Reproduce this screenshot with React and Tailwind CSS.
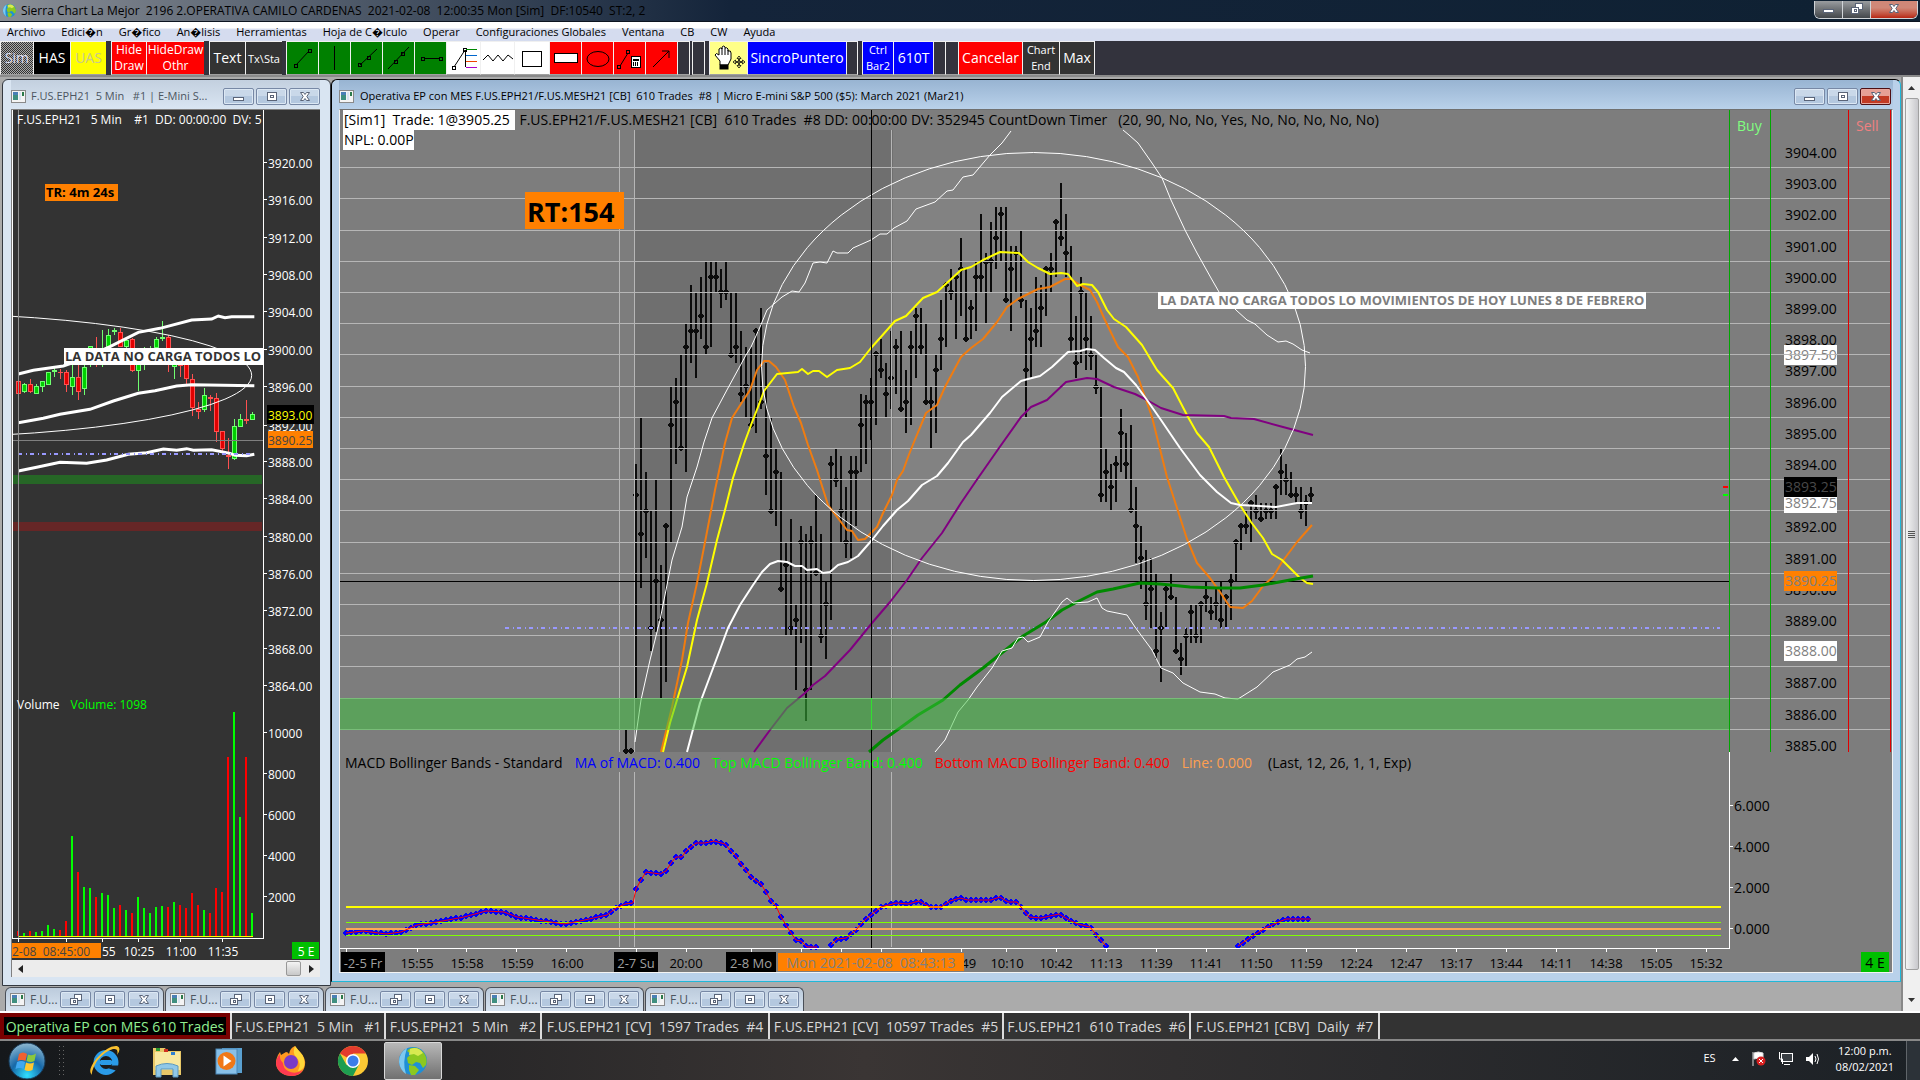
import React from "react";

const line = (s) => "M" + s.trim().split(/\s+/).join("L");

/* high, low, close; one bar every 5px from x=626 */
const BARS = `730 752 751,750 752 751,464 698 495,418 588 534,472 558 511,510 651 628,480 632 581,565 698 620,526 682 526,387 542 425,378 464 402,355 448 448,324 472 347,285 363 331,293 378 331,277 339 316,262 354 347,262 347 277,262 292 277,269 308 292,262 300 292,293 356 355,293 363 347,331 402 394,347 417 386,347 427 425,331 433 331,308 409 402,363 495 456,417 512 511,449 526 472,472 589 589,543 635 565,519 635 628,605 690 620,526 643 542,534 721 690,526 690 542,495 575 573,534 643 636,582 659 604,456 620 464,448 487 480,456 542 511,487 558 542,456 558 472,456 526 472,394 472 425,395 464 402,378 440 402,354 425 354,339 378 370,363 417 394,331 409 378,339 394 347,331 410 409,370 433 402,331 425 347,308 378 316,308 354 347,324 403 402,387 448 402,355 433 370,300 370 339,283 347 285,269 300 292,275 339 277,238 316 269,269 341 339,300 339 308,262 331 277,214 292 277,253 323 262,222 292 261,207 269 238,207 262 214,207 302 300,246 331 269,246 292 253,231 308 300,300 417 370,308 378 339,277 347 331,285 347 308,269 316 269,253 292 269,222 277 222,183 246 238,214 277 253,246 353 339,316 378 363,277 363 292,292 370 339,316 370 355,355 394 387,387 502 495,449 502 472,464 510 487,456 502 464,409 472 433,433 479 464,425 513 510,487 563 526,526 589 558,550 620 604,558 628 589,574 659 651,612 682 628,587 627 589,574 600 597,597 653 651,643 675 659,628 667 636,605 643 612,605 643 636,602 643 604,582 612 597,597 620 612,589 620 604,582 628 620,595 627 597,574 620 581,540 582 542,523 550 526,511 534 526,501 542 503,495 519 511,503 520 519,503 519 511,503 519 511,485 519 487,448 495 472,464 495 480,472 497 495,487 503 495,487 519 511,495 526 503,487 503 495`
  .split(",")
  .map((b, i) => [626 + i * 5, ...b.split(" ").map(Number)]);

const YELLOW = line(`663,752 670,723 687,667 697,620 707,583 717,540 725,510 733,478 744,444 751,425 758,407 764,391 777,374 798,372 802,369 808,374 813,371 819,371 827,377 837,370 850,368 860,362 871,348 880,338 895,321 906,316 923,298 937,292 961,270 971,267 983,260 1000,252 1019,253 1028,262 1038,268 1050,274 1061,273 1068,274 1077,286 1083,284 1092,285 1098,292 1107,310 1114,319 1126,327 1142,345 1157,370 1173,388 1188,417 1197,433 1209,447 1224,477 1240,505 1251,522 1263,538 1272,554 1282,560 1300,578 1307,583 1313,584`);
const ORANGE = line(`661,752 672,707 682,660 688,623 697,583 706,537 715,490 725,443 732,418 739,407 750,390 757,370 764,361 769,361 776,367 785,380 794,407 801,423 808,445 817,470 828,505 847,530 852,531 858,540 865,539 877,527 883,513 892,495 897,480 903,471 908,457 914,442 926,413 937,405 945,387 961,357 971,348 983,339 997,322 1007,307 1018,299 1038,289 1050,287 1065,279 1071,279 1080,285 1090,290 1097,302 1104,318 1118,347 1128,357 1138,377 1152,417 1167,477 1187,539 1197,563 1210,578 1220,592 1230,607 1243,608 1252,601 1263,586 1273,577 1282,562 1297,542 1312,525`);
const WHITE = line(`687,752 700,703 715,663 728,628 740,605 753,585 762,572 770,564 778,561 787,562 795,566 802,566 807,570 817,569 823,573 830,572 838,565 848,562 858,556 872,540 883,526 897,510 908,501 922,485 937,476 948,463 963,442 971,435 990,413 1002,397 1021,381 1028,379 1040,376 1052,367 1068,352 1080,351 1087,349 1095,350 1104,358 1116,368 1124,372 1136,385 1147,400 1161,420 1180,448 1200,475 1217,492 1231,503 1240,505 1259,506 1276,507 1297,503 1312,503`);
const PURPLE = line(`754,752 770,730 787,708 805,693 813,685 825,676 850,650 872,623 890,602 907,580 922,558 942,533 961,503 976,481 999,448 1021,417 1031,407 1047,400 1066,382 1087,378 1097,379 1114,387 1135,394 1147,400 1161,408 1183,415 1224,416 1231,418 1254,419 1283,427 1313,435`);
const GREEN = line(`869,752 883,740 900,728 918,715 943,700 960,685 983,668 1003,652 1023,636 1046,622 1062,610 1077,602 1097,592 1113,589 1140,583 1160,584 1190,587 1217,588 1240,588 1263,585 1290,580 1313,576`);
const BAND_UP = line(`635,742 641,700 650,660 660,620 668,580 672,560 682,527 687,497 697,467 704,442 712,418 728,388 746,355 751,347 760,327 767,310 782,297 792,291 799,292 805,283 813,263 820,262 827,263 833,251 837,253 848,253 853,248 871,240 880,234 887,234 894,228 907,221 916,209 935,202 947,191 953,190 963,177 973,175 990,155 1002,143 1011,131`);
const BAND_UP2 = line(`1123,130 1129,135 1138,143 1152,163 1162,178 1171,200 1185,230 1197,253 1211,278 1219,292 1236,310 1247,320 1255,324 1267,335 1278,342 1286,341 1293,344 1302,350 1310,353`);
const BAND_LOW = line(`935,752 945,740 958,712 968,700 977,687 992,668 1002,651 1012,648 1018,638 1023,637 1028,642 1040,637 1048,622 1062,602 1067,598 1073,603 1088,602 1097,598 1102,608 1107,611 1127,615 1135,627 1152,650 1161,668 1173,673 1183,683 1200,692 1215,694 1225,698 1238,699 1257,687 1273,672 1290,665 1297,659 1305,657 1312,652`);

const MACD_A = `346,933 363,931 386,934 401,932 417,925 437,922 464,917 486,911 504,912 517,917 544,921 564,924 580,921 598,917 607,915 616,908 625,904 633,903 636,889 641,880 646,872 660,874 666,871 671,863 676,857 682,857 686,851 696,843 705,843 714,841 725,844 731,851 736,856 741,864 746,870 751,877 761,884 766,892 771,901 776,906 781,917 786,925 791,933 796,940 801,941 807,947 817,947`;
const MACD_B = `831,945 837,939 846,938 856,930 861,924 866,919 871,915 876,911 881,907 896,903 908,904 919,901 930,907 941,907 950,901 960,898 968,900 991,900 1000,897 1008,902 1017,902 1029,917 1041,918 1059,914 1071,921 1078,924 1090,927 1098,937 1106,946`;
const MACD_C = `1238,946 1251,937 1267,927 1286,919 1311,919`;

/* one marker every 5px along a polyline */
const markers = (s) => {
  const p = s.split(" ").map((q) => q.split(",").map(Number));
  const out = [];
  for (let x = p[0][0]; x <= p[p.length - 1][0]; x += 5) {
    const k = Math.max(1, p.findIndex((q) => q[0] >= x));
    const [x0, y0] = p[k - 1];
    const [x1, y1] = p[k];
    out.push([x, Math.round(y0 + ((y1 - y0) * (x - x0)) / (x1 - x0))]);
  }
  return out;
};
const dots = (s) => markers(s).map(([x, y]) => `M${x - 3},${y}l3,-4l3,4l-3,4z`).join("");

const GRID = [167, 198, 230, 261, 292, 323, 354, 386, 417, 448, 479, 510, 542, 573, 604, 635, 666, 698, 729];
const TIMES = ["15:55", "15:58", "15:59", "16:00"].map((t, i) => [417 + i * 50, t]).concat(
  [[686, "20:00"], [967, ":49"], [1007, "10:10"], [1056, "10:42"], [1106, "11:13"]],
  ["11:39", "11:41", "11:50", "11:59", "12:24", "12:47", "13:17", "13:44", "14:11", "14:38", "15:05", "15:32"].map((t, i) => [1156 + i * 50, t])
);
const TICKS = [346, 417, 466, 516, 566, 636, 686, 751, 801, 841, 881, 921, 961, 1006, 1056, 1106, ...Array.from({ length: 12 }, (_, i) => 1156 + i * 50)];

function T({ x, y, s = 14, fill = "#000", anchor = "start", bold, children }) {
  return (
    <text x={x} y={y} fontSize={s} fill={fill} textAnchor={anchor} fontWeight={bold ? 700 : 400} style={{ whiteSpace: "pre" }}>
      {children}
    </text>
  );
}

function PriceTag({ y, h = 20, bg, fill, children }) {
  return (
    <g>
      <rect x="1784" y={y} width="53" height={h} fill={bg} />
      <T x={1785} y={y + 15} fill={fill}>{children}</T>
    </g>
  );
}

function MainChart() {
  return (
    <div className="relative min-h-0 flex-1 overflow-hidden bg-[#7d7d7d]">
      <svg className="block h-full w-full" viewBox="340 110 1552 862" preserveAspectRatio="xMinYMin slice">
        <rect x="340" y="110" width="1552" height="862" fill="#7d7d7d" />
        <rect x="635" y="130" width="258" height="622" fill="#6f6f6f" />
        <ellipse cx="1033.5" cy="366.5" rx="272" ry="214" fill="#fff" fillOpacity=".045" />
        <g shapeRendering="crispEdges" fill="#000">
          {BARS.map(([x, h, l, c]) => (
            <React.Fragment key={x}>
              <rect x={x - 1} y={h} width="2" height={l - h} fill="#0c0c0c" />
              <path d={`M${x - 3},${c - 1}h1v-1h1v-1h2v1h1v1h1v2h-1v1h-1v1h-2v-1h-1v-1h-1z`} fill="#0c0c0c" />
            </React.Fragment>
          ))}
        </g>
        <g shapeRendering="crispEdges" fill="#b6b6b6">
          {GRID.map((y) => <rect key={y} x="340" y={y} width="1550" height="1" />)}
          {[619, 634, 891].map((x) => (
            <React.Fragment key={x}>
              <rect x={x} y="130" width="1" height="622" />
              <rect x={x} y="772" width="1" height="175" />
            </React.Fragment>
          ))}
        </g>
        <rect x="340" y="581" width="1389" height="1" fill="#000" />
        <path d="M505 628H1720" stroke="#9999ff" strokeWidth="2" strokeDasharray="4 4 1 3" />
        <g fill="none" strokeLinejoin="round">
          <path d={ORANGE} stroke="#f07c10" strokeWidth="2" />
          <path d={YELLOW} stroke="#ffff00" strokeWidth="2" />
          <path d={PURPLE} stroke="#800080" strokeWidth="2" />
          <path d={GREEN} stroke="#008a00" strokeWidth="3" />
          <path d={WHITE} stroke="#fff" strokeWidth="2" />
          <g stroke="#fff" strokeWidth="1">
            <path d={BAND_UP} />
            <path d={BAND_UP2} />
            <path d={BAND_LOW} />
            <ellipse cx="1033.5" cy="366.5" rx="272" ry="214" />
          </g>
        </g>
        <rect x="340" y="698" width="1389" height="32" fill="#3bc33b" fillOpacity=".5" />
        <rect x="871" y="110" width="1" height="838" fill="#000" />
        <rect x="871" y="698" width="1" height="32" fill="#30e030" />

        <g shapeRendering="crispEdges">
          <path d={dots(MACD_A) + dots(MACD_B) + dots(MACD_C)} fill="#0000ff" />
          <rect x="346" y="906" width="1375" height="2" fill="#ffff00" />
          <rect x="346" y="922" width="1375" height="1" fill="#80ff00" />
          <rect x="346" y="928" width="1375" height="2" fill="#ffa858" />
          <rect x="346" y="935" width="1375" height="1" fill="#80ff00" />
        </g>
        {[MACD_A, MACD_B, MACD_C].map((m) => <path key={m} d={line(m)} fill="none" stroke="#f00" />)}
        <g shapeRendering="crispEdges" fill="#fff">
          <rect x="340" y="948" width="1390" height="1" />
          <rect x="1729" y="752" width="1" height="197" />
          {TICKS.map((x) => <rect key={x} x={x} y="949" width="1" height="3" />)}
          {[805, 846, 887, 928].map((y) => <rect key={y} x="1730" y={y} width="3" height="1" />)}
        </g>
        <g shapeRendering="crispEdges">
          <rect x="1729" y="110" width="1" height="642" fill="#00a800" />
          <rect x="1770" y="110" width="1" height="642" fill="#00a800" />
          <rect x="1848" y="110" width="1" height="642" fill="#e00000" />
          <rect x="1890" y="110" width="1" height="642" fill="#e00000" />
          <rect x="1723" y="486" width="5" height="2" fill="#f00" />
          <rect x="1723" y="494" width="5" height="2" fill="#0f0" />
        </g>
        <T x={1737} y={131} fill="#80ff80">Buy</T>
        <T x={1856} y={131} fill="#f08080">Sell</T>
        {Array.from({ length: 20 }, (_, i) => 3904 - i).filter((p) => p !== 3888 && p !== 3893).map((p) => (
          <T key={p} x={1785} y={Math.round(158 + (3904 - p) * 31.2)}>{p}.00</T>
        ))}
        <PriceTag y={345} bg="#fff" fill="#808080">3897.50</PriceTag>
        <rect x="1784" y="354" width="53" height="1" fill="#b6b6b6" />
        <PriceTag y={493} bg="#fff" fill="#808080">3892.75</PriceTag>
        <PriceTag y={477} bg="#000" fill="#484848">3893.25</PriceTag>
        <PriceTag y={571} bg="#ff8000" fill="#808080">3890.25</PriceTag>
        <PriceTag y={641} bg="#fff" fill="#808080">3888.00</PriceTag>
        {["6.000", "4.000", "2.000", "0.000"].map((t, i) => <T key={t} x={1734} y={811 + i * 41}>{t}</T>)}

        {TIMES.map(([x, t]) => <T key={t} x={x} y={968} s={13} anchor="middle">{t}</T>)}
        {[[341, 44, "-2-5 Fr"], [614, 44, "2-7 Su"], [726, 50, "2-8 Mo"]].map(([x, w, t]) => (
          <g key={t}>
            <rect x={x} y="952" width={w} height="20" fill="#000" />
            <T x={x + w / 2} y={968} s={13} fill="#a0a0a0" anchor="middle">{t}</T>
          </g>
        ))}
        <rect x="778" y="953" width="186" height="18" fill="#ff8000" />
        <T x={871} y={968} s={14} fill="#808080" anchor="middle">Mon 2021-02-08  08:43:13</T>
        <rect x="1861" y="952" width="28" height="20" fill="#00c000" />
        <T x={1875} y={968} s={14} anchor="middle">4 E</T>
      </svg>

      <div className="absolute left-[3px] top-0 flex h-5 items-center whitespace-pre text-[14px] leading-5 text-black">
        <span className="bg-white pl-px pr-0.5">{"[Sim1]  Trade: 1@3905.25 "}</span>
        <span className="pl-1">{"F.US.EPH21/F.US.MESH21 [CB]  610 Trades  #8 DD: 00:00:00 DV: 352945 CountDown Timer   (20, 90, No, No, Yes, No, No, No, No, No)"}</span>
      </div>
      <div className="absolute left-[3px] top-5 bg-white pl-px text-[14px] leading-5 text-black">NPL: 0.00P</div>
      <div className="absolute left-[185px] top-[82px] bg-[#ff8000] px-0.5 pt-0.5 text-[27px] font-bold leading-[35px] text-black">
        <span className="pr-2">RT:154</span>
      </div>
      <div className="absolute left-[818px] top-[182px] bg-white px-0.5 text-[13px] font-bold leading-[17px] text-[#7d7d7d]">
        LA DATA NO CARGA TODOS LO MOVIMIENTOS DE HOY LUNES 8 DE FEBRERO
      </div>
      <div className="absolute left-[5px] top-[643px] flex h-5 gap-3 whitespace-pre text-[14px] leading-5">
        <span className="text-black">MACD Bollinger Bands - Standard</span>
        <span className="text-[#0000ff]">MA of MACD: 0.400</span>
        <span className="text-[#00ff00]">Top MACD Bollinger Band: 0.400</span>
        <span className="text-[#ff0000]">Bottom MACD Bollinger Band: 0.400</span>
        <span className="text-[#ffa050]">Line: 0.000</span>
        <span className="pl-1 text-black">(Last, 12, 26, 1, 1, Exp)</span>
      </div>
    </div>
  );
}

/* colour, body top, body bottom, wick top, wick bottom; x step 18 at triple scale */
const CANDLES = `r 903 941 903 952,g 912 935 910 938,r 912 935 897 938,g 919 941 912 941,g 903 922 903 935,g 877 915 877 915,g 870 877 865 890,r 876 879 866 896,r 877 915 870 935,g 890 920 850 945,r 891 935 850 960,g 860 927 850 945,g 798 855 798 860,r 810 840 770 860,g 810 840 750 860,g 765 803 748 810,g 750 757 743 765,r 755 800 743 800,g 780 800 775 805,r 778 872 775 877,g 850 872 845 933,g 830 850 800 870,g 805 830 798 850,g 778 803 770 810,g 770 777 723 783,r 770 850 765 877,g 840 860 830 897,r 845 857 840 890,r 845 898 840 912,r 897 983 882 1007,r 988 997 965 1016,g 945 990 923 995,r 952 955 945 993,r 953 1055 938 1085,r 1053 1108 1053 1112,r 1126 1129 1075 1168,g 1038 1138 1018 1140,g 1018 1040 1002 1042,r 1018 1024 960 1032,g 1002 1019 996 1020`
  .split(",")
  .map((c) => c.split(" "));
const VOLUMES = "r1173 g1179 r1173 g1176 g1173 g1155 g1167 r1170 r1143 g888 r996 g1041 g1044 r1071 g1059 g1065 g1104 r1095 g1110 r1119 g1071 g1104 g1119 g1101 g1098 r1101 g1086 r1095 r1104 r1059 r1095 g1110 r1119 r1044 r1056 r651 g516 g831 r651 g1119".split(" ");
const LEFT_PRICES = [163, 200, 238, 275, 312, 350, 387, 426, 462, 499, 537, 574, 611, 649, 686];

function SideChart() {
  return (
    <div className="relative min-h-0 flex-1 overflow-hidden bg-[#333]">
      <svg className="block h-full w-full" viewBox="12 110 308 850" preserveAspectRatio="xMinYMin slice">
        <rect x="12" y="110" width="308" height="850" fill="#333" />
        <rect x="13" y="475" width="249" height="9" fill="#266626" />
        <rect x="13" y="522" width="249" height="9" fill="#662626" />
        <g transform="translate(0 80) scale(.33333)">
          <g shapeRendering="crispEdges">
            {CANDLES.map(([c, t, b, wt, wb], i) => (
              <g key={i}>
                <rect x={54 + i * 18} y={wt} width="3" height={wb - wt} fill={c === "r" ? "#ff5050" : "#70ff70"} />
                <rect x={50.5 + i * 18} y={+t + 1.5} width="10" height={Math.max(b - t - 3, 1)} strokeWidth="3" fill={c === "r" ? "#e00000" : "#00d000"} stroke={c === "r" ? "#ff5050" : "#70ff70"} />
              </g>
            ))}
          </g>
          <g fill="none" stroke="#fff" strokeWidth="9">
            <path d={line("55,882 100,871 190,858 240,840 330,800 415,757 480,745 575,720 635,717 655,708 675,713 695,710 763,710")} />
            <path d={line("55,1028 130,1015 180,1003 270,988 340,963 415,940 465,932 530,918 575,914 763,917")} />
            <path d={line("55,1173 110,1162 180,1147 260,1150 320,1140 385,1123 440,1118 490,1107 530,1111 560,1106 580,1111 635,1109 690,1120 705,1126 740,1127 763,1123")} />
            <ellipse cx="-300" cy="886" rx="1055" ry="187" strokeWidth="3" />
          </g>
        </g>
        <path d="M18 454H254" stroke="#9999ff" strokeWidth="2" strokeDasharray="4 4 1 3" />
        <rect x="12" y="440" width="251" height="1" fill="#808080" />
        <g shapeRendering="crispEdges">
          {VOLUMES.map((v, i) => {
            const top = 540 + Math.round(+v.slice(1) / 3);
            return <rect key={i} x={17 + i * 6} y={top} width="2" height={936 - top} fill={v[0] === "r" ? "#f00" : "#0f0"} />;
          })}
          <rect x="18" y="936" width="235" height="1" fill="#ff0" />
          <rect x="18" y="110" width="1" height="828" fill="#909090" />
          <rect x="12" y="110" width="1" height="829" fill="#fff" />
          <rect x="263" y="110" width="1" height="829" fill="#fff" />
          <rect x="12" y="938" width="252" height="1" fill="#fff" />
          {[18, 66, 102, 138, 180, 222].map((x) => <rect key={x} x={x} y="939" width="1" height="3" fill="#fff" />)}
          {LEFT_PRICES.map((y) => <rect key={y} x="264" y={y - 1} width="3" height="1" fill="#fff" />)}
          {[0, 1, 2, 3, 4].map((i) => <rect key={i} x="264" y={732 + i * 41} width="3" height="1" fill="#fff" />)}
        </g>
        {LEFT_PRICES.map((y, i) => <T key={y} x={268} y={y + 5} s={12} fill="#fff">{3920 - i * 4}.00</T>)}
        {[10000, 8000, 6000, 4000, 2000].map((v, i) => <T key={v} x={268} y={738 + i * 41} s={12} fill="#fff">{v}</T>)}
        <rect x="267" y="405" width="47" height="19" fill="#000" />
        <T x={268} y={420} s={12} fill="#ffff00">3893.00</T>
        <rect x="268" y="431" width="45" height="17" fill="#ff8000" />
        <T x={268} y={445} s={12} fill="#444">3890.25</T>
        <T x={102} y={956} s={12} fill="#fff">55</T>
        <rect x="12" y="943" width="89" height="15" fill="#ff8000" />
        <T x={12} y={956} s={12} fill="#444">2-08  08:45:00</T>
        <T x={139} y={956} s={12} fill="#fff" anchor="middle">10:25</T>
        <T x={181} y={956} s={12} fill="#fff" anchor="middle">11:00</T>
        <T x={223} y={956} s={12} fill="#fff" anchor="middle">11:35</T>
        <rect x="292" y="942" width="27" height="17" fill="#00c000" />
        <T x={306} y={956} s={12} fill="#fff" anchor="middle">5 E</T>
      </svg>
      <div className="absolute left-[5px] top-px w-[246px] overflow-hidden whitespace-pre text-[12px] leading-[18px] text-white">
        {"F.US.EPH21   5 Min    #1  DD: 00:00:00  DV: 5"}
      </div>
      <div className="absolute left-[33px] top-[74px] w-[73px] whitespace-nowrap bg-[#ff8000] pl-px text-[13px] font-bold leading-[17px] text-black">TR: 4m 24s</div>
      <div className="absolute left-[52px] top-[238px] w-[199px] overflow-hidden whitespace-nowrap bg-white pl-px text-[13px] font-bold leading-[17px] text-[#333]">
        LA DATA NO CARGA TODOS LO
      </div>
      <div className="absolute left-[5px] top-[586px] flex gap-[11px] text-[12px] leading-[17px]">
        <span className="text-white">Volume</span>
        <span className="text-[#00ff00]">Volume: 1098</span>
      </div>
    </div>
  );
}

function WinGlyph({ kind, color = "#5a6478" }) {
  return (
    <svg width="14" height="12" viewBox="0 0 14 12" shapeRendering="crispEdges" fill="#fff" stroke={color}>
      {kind === "min" && <rect x="1.5" y="6.5" width="10" height="3" />}
      {kind === "max" && <><rect x="2.5" y="1.5" width="9" height="8" /><rect x="5.5" y="4.5" width="3" height="2" fill="none" /></>}
      {kind === "restore" && <><rect x="5.5" y=".5" width="7" height="6" /><rect x="1.5" y="4.5" width="7" height="6" /><rect x="4.5" y="6.5" width="2" height="2" /></>}
      {kind === "close" && <path shapeRendering="auto" d="M2.5 1.5h3l1.5 2 1.5-2h3L8.8 5.5l2.7 4h-3L7 7.5l-1.500 2h-3l2.700-4z" />}
    </svg>
  );
}

function WinButton({ kind, active, label }) {
  return (
    <button
      aria-label={label}
      className={
        active && kind === "close"
          ? "flex h-[17px] w-[31px] items-center justify-center rounded-xs border border-[#4d0f14] bg-linear-to-b from-[#e6a096] from-45% to-[#c23a24] to-50% shadow-[inset_0_0_0_1px_#e8a79e]"
          : "flex h-[17px] w-[31px] items-center justify-center rounded-xs border border-[#7788a5] bg-linear-to-b from-[#c9d8e9] from-45% to-[#b4c8df] to-50% shadow-[inset_0_0_0_1px_#dce8f4]"
      }
    >
      <WinGlyph kind={kind} />
    </button>
  );
}

function DocIcon() {
  return (
    <svg width="15" height="13" viewBox="0 0 15 13" shapeRendering="crispEdges">
      <rect x=".5" y=".5" width="14" height="12" fill="#f4f4f4" stroke="#8a8a8a" />
      <rect x="2" y="2" width="5" height="8" fill="#3f8f7f" />
      <rect x="2" y="2" width="5" height="3" fill="#4a7fb5" />
      <rect x="8" y="2" width="2" height="8" fill="#d8e4f0" />
      <rect x="11" y="2" width="2" height="4" fill="#2c7a4a" />
    </svg>
  );
}

function MiniWindow() {
  return (
    <div className="flex h-6 w-[159px] items-center gap-[3px] rounded-t-md border border-b-0 border-[#4a4f58] bg-linear-to-b from-[#bccbdc] to-[#d6e3f0] pl-1 pr-1">
      <DocIcon />
      <span className="min-w-0 flex-1 pl-0.5 text-[12px] text-[#4c5560]">F.U...</span>
      <WinButton kind="restore" label="Restaurar" />
      <WinButton kind="max" label="Maximizar" />
      <WinButton kind="close" label="Cerrar" />
    </div>
  );
}

const tool = "flex h-full shrink-0 items-center justify-center border-y border-l border-[#f0f0f0] border-b-[#a0a0a0] ";

function Tool({ c, label, children }) {
  return <button aria-label={label} className={tool + c}>{children}</button>;
}

function DrawIcon({ kind }) {
  const s = { fill: "none", stroke: "#000", shapeRendering: "crispEdges" };
  return (
    <svg width="31" height="32" viewBox="0 0 31 32" {...s}>
      {kind === "line" && <><path shapeRendering="auto" d="M9 23L22 9" /><rect x="7.500" y="22.500" width="3" height="3" /><rect x="21.500" y="7.500" width="3" height="3" /></>}
      {kind === "vert" && <path d="M15.500 4v24" />}
      {kind === "ray" && <><path shapeRendering="auto" d="M9 23L26 7" /><rect x="7.500" y="21.500" width="3" height="3" /><rect x="16.500" y="14.500" width="3" height="3" /></>}
      {kind === "ext" && <><path shapeRendering="auto" d="M5 27L26 5" /><rect x="11.500" y="18.500" width="3" height="3" /><rect x="18.500" y="10.500" width="3" height="3" /></>}
      {kind === "hseg" && <><path d="M9 16.500h16" /><rect x="6.500" y="15.500" width="3" height="3" /><rect x="24.500" y="15.500" width="3" height="3" /></>}
      {kind === "fib" && <><path shapeRendering="auto" d="M6 25L17 8" /><rect x="4.500" y="24.500" width="3" height="3" /><rect x="15.500" y="6.500" width="3" height="3" /><path stroke="#080" d="M18 7.500h11" /><path stroke="#06c" d="M18 13.500h11" /><path stroke="#e40" d="M18 19.500h11" /><path stroke="#a0c" d="M18 25.500h11" /><path d="M17.500 8v17" /></>}
      {kind === "zig" && <path shapeRendering="auto" d="M1 18l5-5 5 6 5-6 5 6 5-6 5 4" />}
      {kind === "rect" && <rect x="5.500" y="9.500" width="19" height="15" />}
      {kind === "hrect" && <rect x="4.500" y="11.500" width="23" height="9" fill="#fff" />}
      {kind === "ell" && <ellipse shapeRendering="auto" cx="16" cy="17" rx="11" ry="7.500" />}
      {kind === "calc" && <><path shapeRendering="auto" d="M6 24L14 11" /><rect x="3.500" y="23.500" width="3" height="3" /><rect x="12.500" y="8.500" width="3" height="3" /><rect x="17.500" y="14.500" width="9" height="11" fill="#fff" /><path d="M19 17.500h6M19 20.500h1m1 0h1m1 0h1M19 22.500h1m1 0h1m1 0h1" strokeWidth="2" /></>}
      {kind === "arrow" && <path shapeRendering="auto" d="M7 25L23 9M16 9h7v7" />}
    </svg>
  );
}

const GREEN_TOOLS = ["line", "vert", "ray", "ext", "hseg"];

function Toolbar() {
  return (
    <div className="flex h-9 items-stretch border-b-2 border-[#8a8a8a] bg-[#33333d] text-[14px] leading-none text-white">
      <Tool c="w-[33px] bg-[repeating-conic-gradient(#333_0_25%,#aaa_0_50%)] bg-size-[2px_2px] text-[#dde]">Sim</Tool>
      <Tool c="w-[37px] bg-black">HAS</Tool>
      <Tool c="w-9 bg-[#ffff00] text-[#c8c890]">UAS</Tool>
      <span className="w-[5px]" />
      <Tool c="w-[35px] bg-[#ff0000] text-[12px] leading-4"><span>Hide<br />Draw</span></Tool>
      <Tool c="w-[58px] bg-[#ff0000] text-[12px] leading-4"><span>HideDraw<br />Othr</span></Tool>
      <span className="w-[5px]" />
      <Tool c="w-[36px] bg-[#333]">Text</Tool>
      <Tool c="w-[37px] bg-[#333] text-[11px]">Tx\Sta</Tool>
      <span className="w-1" />
      {GREEN_TOOLS.map((k) => <Tool key={k} label={k} c="w-8 bg-[#008000]"><DrawIcon kind={k} /></Tool>)}
      {["fib", "zig"].map((k) => <Tool key={k} label={k} c="w-[34px] bg-white"><DrawIcon kind={k} /></Tool>)}
      <Tool label="rect" c="w-[35px] bg-white"><DrawIcon kind="rect" /></Tool>
      {["hrect", "ell", "calc", "arrow"].map((k) => <Tool key={k} label={k} c="w-8 bg-[#ff0000]"><DrawIcon kind={k} /></Tool>)}
      <Tool label="Barra 1" c="w-[13px] border-r bg-[#33333d]" />
      <span className="w-0.5" />
      <Tool label="Barra 2" c="w-[13px] border-r bg-[#33333d]" />
      <span className="w-1" />
      <Tool label="Mover" c="w-[38px] bg-[#ffff88]">
        <svg width="34" height="30" viewBox="0 0 34 30" fill="#fff" stroke="#000">
          <path d="M8 22V18L3 12q1-3 4 0V6q2-2 3 0V4q2-2 3 0v1q2-1 3 1v2q3-1 3 2v6l-3 6z" />
          <path d="M10 5v7M13 5v7M16 7v5" fill="none" />
          <rect x="8" y="22" width="8" height="4" fill="#000" />
          <path d="M27 13l2 2.500h-1.500V18.500h3V17L33 19l-2.500 2v-1.500h-3v3H29L27 25l-2-2.500h1.500v-3h-3V21L21 19l2.500-2v1.500h3v-3H25z" fill="#ff8" strokeWidth=".8" />
        </svg>
      </Tool>
      <Tool c="w-[99px] bg-[#0000ff]">SincroPuntero</Tool>
      <Tool label="Barra 3" c="w-[12px] border-r bg-[#33333d]" />
      <span className="w-1" />
      <Tool c="w-[31px] bg-[#0000ff] text-[11px] leading-4"><span>Ctrl<br />Bar2</span></Tool>
      <Tool c="w-10 bg-[#0000ff]">610T</Tool>
      <Tool label="Barra 4" c="w-[12px] bg-[#33333d]" />
      <Tool label="Barra 5" c="w-[13px] bg-[#33333d]" />
      <Tool c="w-[64px] bg-[#ff0000]">Cancelar</Tool>
      <Tool c="w-[37px] bg-[#333] text-[11px] leading-4"><span>Chart<br />End</span></Tool>
      <Tool c="w-9 border-r bg-[#333]">Max</Tool>
    </div>
  );
}

function Globe({ size }) {
  return (
    <svg width={size} height={size} viewBox="0 0 32 32">
      <circle cx="16" cy="16" r="14" fill="#1f8fd6" />
      <path d="M10 3Q2 8 2 17q1 8 7 12Q5 18 10 3z" fill="#7cc8f0" />
      <path d="M12 4q8-4 15 4 4 6 2 12l-3 3-3-5-4-1-4 3-4-2-1-5 4-4-4-3zM12 20l6 1 4 4-4 5h-4l-2-5z" fill="#8cc820" />
      <path d="M13 4q8-3 13 4l-5 3-4-2-5 1z" fill="#d8ea50" />
    </svg>
  );
}

const MENU = ["Archivo", "Edici\uFFFDn", "Gr\uFFFDfico", "An\uFFFDlisis", "Herramientas", "Hoja de C\uFFFDlculo", "Operar", "Configuraciones Globales", "Ventana", "CB", "CW", "Ayuda"];

function ChartTab({ c, children }) {
  return <button className={"flex h-full shrink-0 items-center justify-center whitespace-pre border-r-2 border-[#dcdcdc] bg-[#333] text-[14px] text-[#d8d8d8] " + c}>{children}</button>;
}

function TaskBar() {
  return (
    <footer className="flex h-[39px] shrink-0 items-center bg-linear-to-r from-[#15181b] via-[#3a3534] via-45% to-[#1c2126] text-white">
      <button aria-label="Inicio" className="ml-2 mr-3">
        <svg width="38" height="38" viewBox="0 0 38 38">
          <defs>
            <radialGradient id="orb" cx="50%" cy="90%" r="90%"><stop offset="0" stopColor="#30e0ff" /><stop offset=".5" stopColor="#1668a8" /><stop offset="1" stopColor="#8fb8d0" /></radialGradient>
          </defs>
          <circle cx="19" cy="19" r="18" fill="url(#orb)" stroke="#173a58" />
          <path d="M11 12q4-3 8 0l-1.500 7q-4-2-8 0z" fill="#f06030" />
          <path d="M20 12.500q4 2 8-1l-1.500 7.500q-4 2-8 0z" fill="#8cc83c" />
          <path d="M9 20q4-2 8 0l-1.500 7q-4-2-8 0z" fill="#40a8f0" />
          <path d="M18 20.500q4 2 8 0L24.500 28q-4 2-8 0z" fill="#ffc830" />
        </svg>
      </button>
      <svg width="8" height="32" viewBox="0 0 8 32" fill="#666">
        {Array.from({ length: 16 }, (_, i) => <rect key={i} x={i % 2 ? 1 : 5} y={1 + (i >> 1) * 4} width="1" height="1" />)}
      </svg>
      <div className="ml-1 flex items-center">
        <button aria-label="Internet Explorer" className="flex w-[62px] justify-center pl-2">
          <svg width="34" height="34" viewBox="0 0 34 34">
            <circle cx="18" cy="18.500" r="9.500" fill="none" stroke="#2a9be8" strokeWidth="6" />
            <path d="M13 16h10v5h-10z" fill="#2a9be8" />
            <path d="M22 21.500h10l-4 5-7-2z" fill="#1b1f24" />
            <path d="M10 16.500h20v4H10z" fill="#2a9be8" />
            <path d="M4 31Q-1 27 8 15 20 1 29 2q5 2 0 9Q31 4 25 5 17 7 9 17q-6 10-5 14z" fill="#f8c030" />
          </svg>
        </button>
        <button aria-label="Explorador" className="flex w-[62px] justify-center pl-2">
          <svg width="34" height="34" viewBox="0 0 34 34">
            <path d="M3 4h12l2 3h14v24H3z" fill="#e8c868" />
            <rect x="5" y="8" width="25" height="18" fill="#f8e8a0" />
            <rect x="6" y="4" width="4" height="3" fill="#2a9a30" /><rect x="14" y="5" width="4" height="3" fill="#d03020" /><rect x="21" y="8" width="4" height="3" fill="#3080d0" />
            <path d="M6 33V22q11-5 22 0v11h-5v-8H11v8z" fill="#90c8e8" stroke="#5a98c0" />
          </svg>
        </button>
        <button aria-label="Reproductor" className="flex w-[62px] justify-center pl-2">
          <svg width="30" height="30" viewBox="0 0 30 30">
            <rect x="8" y="2" width="20" height="25" fill="#5aa0d0" /><rect x="2" y="3" width="21" height="25" fill="#88c0e8" stroke="#4a88b8" />
            <circle cx="12.500" cy="15" r="9" fill="#f07818" /><path d="M9.500 9.500l8 5.500-8 5.500z" fill="#fff" />
          </svg>
        </button>
        <button aria-label="Firefox" className="flex w-[62px] justify-center pl-2">
          <svg width="32" height="34" viewBox="0 0 32 34">
            <path d="M20 2q3 4 5 6 6 6 5 13-2 11-14 11Q3 31 1 20q0-7 4-12l1 3 5-3q2 0 3 2 1-6 6-8z" fill="#ff9a20" />
            <path d="M20 2q3 4 5 6 6 6 4 15-3 4-6 4 4-8-2-14-4-4-1-11z" fill="#ffd83a" />
            <path d="M1 20q2 11 15 12 8 0 12-6-8 5-15 1-5-3-5-8-4-4-3-9-4 4-4 10z" fill="#ff3a50" />
            <circle cx="16" cy="18" r="7" fill="#7a3ac8" />
          </svg>
        </button>
        <button aria-label="Chrome" className="flex w-[62px] justify-center pl-2">
          <svg width="32" height="32" viewBox="0 0 32 32">
            <circle cx="16" cy="16" r="15" fill="#fcc934" />
            <path d="M16 16L3 8.500A15 15 0 0 1 29 8.500H16z" fill="#e33b2e" />
            <path d="M3 8.500A15 15 0 0 0 16 31l6-11.500L16 16 9.500 20z" fill="#1e9e50" />
            <circle cx="16" cy="16" r="7" fill="#fff" /><circle cx="16" cy="16" r="5.500" fill="#3b7de8" />
          </svg>
        </button>
        <button aria-label="Sierra Chart" className="ml-1 flex h-[38px] w-[58px] items-center justify-center rounded-xs border border-[#d8d8d8] bg-linear-to-b from-[#b8b8b8] to-[#707070]">
          <Globe size={32} />
        </button>
      </div>
      <div className="ml-auto flex items-center gap-3 pb-1 text-[11px]">
        <span className="pr-1">ES</span>
        <svg width="7" height="5" viewBox="0 0 7 5"><path d="M0 5l3.500-4L7 5z" fill="#fff" /></svg>
        <svg width="15" height="15" viewBox="0 0 15 15"><path d="M2 1v14M3 2q4-2 9 0v6q-4-2-9 0z" fill="#fff" stroke="#ddd" /><circle cx="10" cy="10" r="4.500" fill="#d82020" /><path d="M8 8l4 4m0-4l-4 4" stroke="#fff" /></svg>
        <svg width="15" height="15" viewBox="0 0 15 15" fill="none" stroke="#fff"><rect x="3.500" y="2.500" width="11" height="8" fill="#3a3f44" /><path d="M6 13.500h6M1.500 1v7h3v5" /></svg>
        <svg width="15" height="14" viewBox="0 0 15 14"><path d="M1 5h3l4-4v12L4 9H1z" fill="#fff" /><path d="M10 4q2 3 0 6M12 2q3 5 0 10" stroke="#fff" fill="none" /></svg>
        <div className="flex flex-col items-center pl-1 pr-1 leading-4">
          <span>12:00 p.m.</span>
          <span>08/02/2021</span>
        </div>
      </div>
      <button aria-label="Mostrar escritorio" className="ml-2 h-full w-[14px] border-l border-[#60656a] bg-[#2c3238]" />
    </footer>
  );
}

export default function App() {
  return (
    <div className="flex h-screen min-h-[1080px] flex-col overflow-hidden bg-[#ababab] font-['Open_Sans','Noto_Sans',sans-serif]">
      <header className="flex h-[21px] shrink-0 items-center bg-linear-to-r from-[#8a8f96] via-[#14243a] via-38% to-[#0f2133] to-95% pl-0.5">
        <Globe size={15} />
        <h1 className="whitespace-pre pl-1 text-[12px] leading-5 text-black">{"Sierra Chart La Mejor  2196 2.OPERATIVA CAMILO CARDENAS  2021-02-08  12:00:35 Mon [Sim]  DF:10540  ST:2, 2"}</h1>
        <div className="mb-0.5 ml-auto mr-0.5 flex h-[18px] overflow-hidden rounded-b-md border border-t-0 border-[#d0d4d8]">
          <button aria-label="Minimizar" className="flex w-7 items-center justify-center border-r border-[#d0d4d8] bg-linear-to-b from-[#9a9da0] to-[#44484c]"><WinGlyph kind="min" /></button>
          <button aria-label="Restaurar" className="flex w-7 items-center justify-center border-r border-[#d0d4d8] bg-linear-to-b from-[#9a9da0] to-[#44484c]"><WinGlyph kind="restore" /></button>
          <button aria-label="Cerrar" className="flex w-[46px] items-center justify-center bg-linear-to-b from-[#d08878] from-40% to-[#b82410]"><WinGlyph kind="close" /></button>
        </div>
      </header>
      <nav className="flex h-5 shrink-0 items-center gap-4 border-t border-[#0c1420] bg-linear-to-b from-white from-30% to-[#d5dcef] to-40% pl-[7px] pt-0.5 text-[11px] text-black">
        {MENU.map((m) => <button key={m}>{m}</button>)}
      </nav>
      <Toolbar />

      <main className="flex min-h-0 flex-1">
        <div className="flex min-w-0 flex-1 flex-col pl-0.5 pt-0.5">
          <div className="flex min-h-0 flex-1">
            <section className="flex w-[329px] shrink-0 flex-col rounded-t-md border border-[#333840] bg-[#d9e5f2] pb-2 pl-2 pr-[10px]">
              <div className="flex h-[29px] shrink-0 items-center gap-1 bg-linear-to-b from-[#c3d0df] to-[#d9e5f2] pt-1">
                <DocIcon />
                <h2 className="flex-1 whitespace-pre pl-px text-[11px] text-[#4c5560]">{"F.US.EPH21  5 Min   #1 | E-Mini S..."}</h2>
                <div className="flex gap-0.5">
                  <WinButton kind="min" label="Minimizar" />
                  <WinButton kind="max" label="Maximizar" />
                  <WinButton kind="close" label="Cerrar" />
                </div>
              </div>
              <div className="flex min-h-0 flex-1 flex-col border-l border-t border-[#808080]">
                <SideChart />
                <div className="flex h-[17px] shrink-0 items-center justify-between bg-[#ececec] px-1.5">
                  <svg width="5" height="8" viewBox="0 0 5 8"><path d="M5 0v8L0 4z" fill="#222" /></svg>
                  <div className="ml-auto mr-2 h-[15px] w-[15px] rounded-xs border border-[#989898] bg-linear-to-b from-[#f4f4f4] to-[#c8c8c8]" />
                  <svg width="5" height="8" viewBox="0 0 5 8"><path d="M0 0v8l5-4z" fill="#222" /></svg>
                </div>
              </div>
            </section>

            <section className="mb-1 flex min-w-0 flex-1 flex-col rounded-t-md border border-black border-r-[#20b8d8] border-b-[#20b8d8] bg-[#b9d1ea] px-[7px] pb-2">
              <div className="flex h-[29px] shrink-0 items-center gap-1 bg-linear-to-b from-[#98b4d2] to-[#b9d1ea] pr-0.5 pt-1">
                <DocIcon />
                <h2 className="flex-1 whitespace-pre pl-0.5 text-[11px] text-black">{"Operativa EP con MES F.US.EPH21/F.US.MESH21 [CB]  610 Trades  #8 | Micro E-mini S&P 500 ($5): March 2021 (Mar21)"}</h2>
                <div className="flex gap-0.5">
                  <WinButton kind="min" active label="Minimizar" />
                  <WinButton kind="max" active label="Maximizar" />
                  <WinButton kind="close" active label="Cerrar" />
                </div>
              </div>
              <div className="flex min-h-0 flex-1 flex-col border border-[#f4f4f4] border-t-[#707070]">
                <MainChart />
              </div>
            </section>
          </div>
          <div className="flex h-[25px] shrink-0 gap-px pl-[3px] pt-px">
            {[0, 1, 2, 3, 4].map((i) => <MiniWindow key={i} />)}
          </div>
        </div>
        <div className="flex w-[19px] shrink-0 flex-col items-center justify-between border-l-2 border-[#888] bg-[#f0f0f0] py-2">
          <svg width="7" height="5" viewBox="0 0 7 5"><path d="M0 5l3.500-4L7 5z" fill="#333" /></svg>
          <div className="mb-7 mt-2 flex w-[14px] flex-1 items-center justify-center rounded-xs border border-[#a0a0a0] bg-linear-to-r from-[#f4f4f4] to-[#c8c8cc]">
            <svg width="8" height="7" viewBox="0 0 8 7" shapeRendering="crispEdges" fill="#555"><rect width="7" height="1" /><rect y="2" width="7" height="1" /><rect y="4" width="7" height="1" /><rect y="6" width="7" height="1" /></svg>
          </div>
          <svg width="7" height="5" viewBox="0 0 7 5"><path d="M0 0l3.500 4L7 0z" fill="#333" /></svg>
        </div>
      </main>

      <div className="flex h-[30px] shrink-0 items-stretch border-y-2 border-t-white border-b-[#888] bg-[#333]">
        <button className="flex w-[230px] shrink-0 items-center justify-center whitespace-pre border-4 border-[#780000] bg-black text-[14px] text-[#90ee90]">Operativa EP con MES 610 Trades</button>
        <ChartTab c="w-[156px] border-l-2">{"F.US.EPH21  5 Min   #1"}</ChartTab>
        <ChartTab c="w-[156px]">{"F.US.EPH21  5 Min   #2"}</ChartTab>
        <ChartTab c="w-[228px]">{"F.US.EPH21 [CV]  1597 Trades  #4"}</ChartTab>
        <ChartTab c="w-[234px]">{"F.US.EPH21 [CV]  10597 Trades  #5"}</ChartTab>
        <ChartTab c="w-[187px]">{"F.US.EPH21  610 Trades  #6"}</ChartTab>
        <ChartTab c="w-[189px]">{"F.US.EPH21 [CBV]  Daily  #7"}</ChartTab>
      </div>
      <TaskBar />
    </div>
  );
}
